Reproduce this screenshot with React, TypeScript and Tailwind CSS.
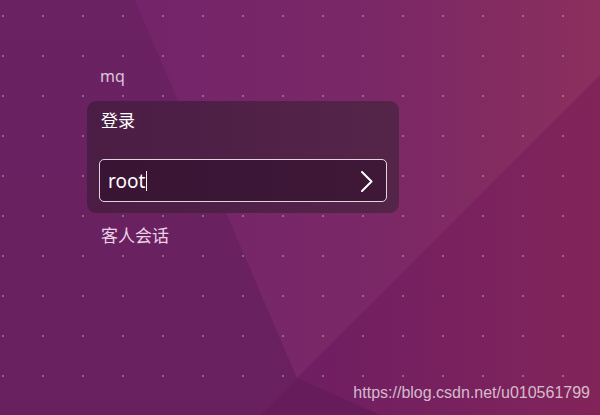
import React from "react";

function Wallpaper() {
  return (
    <svg
      className="absolute inset-0 h-full w-full"
      viewBox="0 0 600 415"
      preserveAspectRatio="none"
    >
      <defs>
        <linearGradient id="mid" x1="130" y1="0" x2="600" y2="0" gradientUnits="userSpaceOnUse">
          <stop offset="0" stopColor="#73246a" />
          <stop offset="0.55" stopColor="#7b2866" />
          <stop offset="1" stopColor="#8b2f5d" />
        </linearGradient>
        <linearGradient id="left" x1="0" y1="0" x2="0" y2="415" gradientUnits="userSpaceOnUse">
          <stop offset="0" stopColor="#6b2262" />
          <stop offset="1" stopColor="#69205f" />
        </linearGradient>
        <linearGradient id="lr" x1="290" y1="0" x2="600" y2="0" gradientUnits="userSpaceOnUse">
          <stop offset="0" stopColor="#6e1e63" />
          <stop offset="1" stopColor="#82245a" />
        </linearGradient>
        <pattern id="dots" x="2" y="15" width="40" height="40" patternUnits="userSpaceOnUse">
          <rect x="0" y="0" width="2" height="2" fill="rgba(255,255,255,0.28)" />
        </pattern>
      </defs>
      <rect x="0" y="0" width="600" height="415" fill="url(#mid)" />
      <polygon points="600,75 600,415 260,415" fill="url(#lr)" />
      <polygon points="0,0 135,0 297,378 260,415 0,415" fill="url(#left)" />
      <polygon points="297,378 380,415 260,415" fill="#661c5a" />
      <rect x="0" y="0" width="600" height="415" fill="url(#dots)" />
    </svg>
  );
}

export default function App() {
  return (
    <div
      className="relative h-[415px] w-[600px] overflow-hidden"
      style={{ fontFamily: '"Noto Sans", "Noto Sans CJK SC", sans-serif' }}
    >
      <Wallpaper />
      <div className="relative ml-[87px] w-[312px] pt-[66px]">
        <div className="h-[20px] pl-[13px] text-[16px] leading-[20px] text-[#dcc6dc]">mq</div>
        <div className="mt-[15px] h-[112px] rounded-[9px] bg-gradient-to-r from-[#4b1d45] to-[#552449] px-[12px] pt-[10px]">
          <div className="h-[20px] pl-[2px] text-[17px] leading-[20px] text-white">登录</div>
          <div className="mt-[28px] flex h-[43px] items-center justify-between rounded-[5px] border border-[#e2d4de] bg-gradient-to-r from-[#391433] to-[#3f1838] pl-[8px] pr-[13px]">
            <div className="flex h-[24px] items-center pt-[1px]">
              <span className="text-[19px] leading-[24px] text-white">root</span>
              <span className="ml-[1px] block h-[20px] w-[1px] bg-white" />
            </div>
            <svg width="12" height="21" viewBox="0 0 12 21" className="mt-[1px]">
              <polyline
                points="1,1 10.5,10.5 1,20"
                fill="none"
                stroke="white"
                strokeWidth="2"
                strokeLinecap="round"
                strokeLinejoin="round"
              />
            </svg>
          </div>
        </div>
        <div className="mt-[13px] h-[20px] pl-[14px] text-[17px] leading-[20px] text-[#ead2e6]">客人会话</div>
      </div>
      <div
        className="absolute right-[10px] top-[385px] text-[16px] leading-none text-white/70"
        style={{ fontFamily: '"Liberation Sans", Arial, sans-serif' }}
      >
        https://blog.csdn.net/u010561799
      </div>
    </div>
  );
}
